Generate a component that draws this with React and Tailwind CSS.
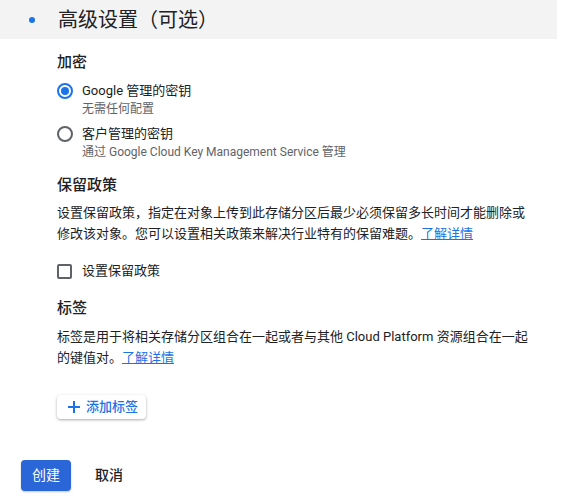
import React, { useState } from "react";

const font = { fontFamily: 'Roboto, "Noto Sans CJK SC", sans-serif' };

function Radio({ checked }) {
  return (
    <span
      className={`flex h-4 w-4 shrink-0 items-center justify-center rounded-full border-2 ${
        checked ? "border-[#1a73e8]" : "border-[#5f6368]"
      }`}
    >
      {checked && <span className="h-2 w-2 rounded-full bg-[#1a73e8]" />}
    </span>
  );
}

function Option({ checked, label, sub, onClick }) {
  return (
    <div className="flex cursor-pointer gap-[9px]" onClick={onClick}>
      <div className="pt-[1px]">
        <Radio checked={checked} />
      </div>
      <div>
        <div className="text-[13px] leading-[18px] text-[#202124]">{label}</div>
        <div className="mt-[1px] text-[12px] leading-[16px] text-[#5f6368]">{sub}</div>
      </div>
    </div>
  );
}

export default function App() {
  const [keyType, setKeyType] = useState("google");
  const [retention, setRetention] = useState(false);

  return (
    <div className="min-h-screen w-[585px] bg-white text-[#202124]" style={font}>
      {/* Section header */}
      <div className="flex h-[39px] w-[557px] items-center bg-[#f3f3f3]">
        <div className="flex w-[58px] shrink-0 pl-[29px]">
          <span className="block h-[6px] w-[6px] shrink-0 rounded-full bg-[#1a73e8]" />
        </div>
        <h2 className="text-[20px] leading-[24px] font-normal text-[#202124]">
          高级设置（可选）
        </h2>
      </div>

      <div className="w-[532px] pl-[57px]">
        {/* Encryption */}
        <h3 className="mt-[13px] text-[15px] leading-[20px] font-medium">加密</h3>
        <div className="mt-[10px] flex flex-col gap-[8px]">
          <Option
            checked={keyType === "google"}
            label="Google 管理的密钥"
            sub="无需任何配置"
            onClick={() => setKeyType("google")}
          />
          <Option
            checked={keyType === "customer"}
            label="客户管理的密钥"
            sub="通过 Google Cloud Key Management Service 管理"
            onClick={() => setKeyType("customer")}
          />
        </div>

        {/* Retention policy */}
        <h3 className="mt-[15px] text-[15px] leading-[20px] font-medium">保留政策</h3>
        <p className="mt-[7px] text-[13px] leading-[21px] text-[#202124]">
          设置保留政策，指定在对象上传到此存储分区后最少必须保留多长时间才能删除或修改该对象。您可以设置相关政策来解决行业特有的保留难题。
          <a href="#" className="text-[#1a73e8] underline">
            了解详情
          </a>
        </p>
        <label
          className="mt-[17px] flex h-5 cursor-pointer items-center gap-[10px]"
          onClick={() => setRetention(!retention)}
        >
          <span
            className={`h-[15px] w-[15px] rounded-[2px] border-2 ${
              retention ? "border-[#1a73e8] bg-[#1a73e8]" : "border-[#5f6368]"
            }`}
          />
          <span className="text-[13px] leading-[20px]">设置保留政策</span>
        </label>

        {/* Labels */}
        <h3 className="mt-[17px] text-[15px] leading-[20px] font-medium">标签</h3>
        <p className="mt-[8px] text-[13px] leading-[21px] text-[#202124]">
          标签是用于将相关存储分区组合在一起或者与其他 Cloud Platform 资源组合在一起的键值对。
          <a href="#" className="text-[#1a73e8] underline">
            了解详情
          </a>
        </p>

        <button className="mt-[27px] flex h-[24px] w-[89px] items-center rounded-[4px] bg-white pl-[11px] text-[13px] font-medium text-[#1a73e8] shadow-[0_1px_3px_rgba(60,64,67,0.3),0_1px_2px_rgba(60,64,67,0.15)]">
          <svg width="12" height="12" viewBox="0 0 12 12">
            <path d="M6 0v12M0 6h12" stroke="#1a73e8" strokeWidth="2" />
          </svg>
          <span className="ml-[6px]">添加标签</span>
        </button>
      </div>

      {/* Actions */}
      <div className="mt-[41px] flex items-center pl-[21px]">
        <button className="h-[31px] w-[50px] rounded-[4px] bg-[#2a66d8] text-[14px] text-white shadow-[0_1px_2px_rgba(60,64,67,0.3)]">
          创建
        </button>
        <button className="ml-[24px] text-[14px] font-medium text-[#202124]">取消</button>
      </div>
    </div>
  );
}
